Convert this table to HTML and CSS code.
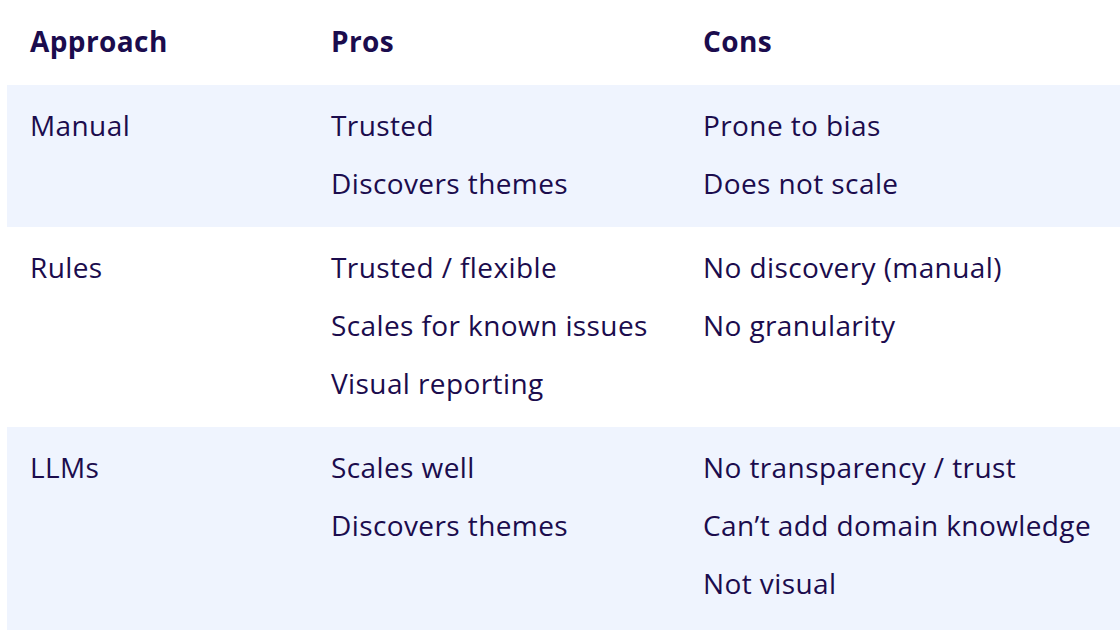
FILE: index.html
```html
<!DOCTYPE html>
<html lang="en">
<head>
<meta charset="utf-8">
<title>Approach comparison</title>
<link rel="stylesheet" href="styles.css">
</head>
<body>
<div class="table">
  <div class="row head">
    <div class="cell">Approach</div>
    <div class="cell">Pros</div>
    <div class="cell">Cons</div>
  </div>
  <div class="row shaded">
    <div class="cell"><div class="item">Manual</div></div>
    <div class="cell"><div class="item">Trusted</div><div class="item">Discovers themes</div></div>
    <div class="cell"><div class="item">Prone to bias</div><div class="item">Does not scale</div></div>
  </div>
  <div class="row">
    <div class="cell"><div class="item">Rules</div></div>
    <div class="cell"><div class="item">Trusted / flexible</div><div class="item">Scales for known issues</div><div class="item">Visual reporting</div></div>
    <div class="cell"><div class="item">No discovery (manual)</div><div class="item">No granularity</div></div>
  </div>
  <div class="row shaded last">
    <div class="cell"><div class="item">LLMs</div></div>
    <div class="cell"><div class="item">Scales well</div><div class="item">Discovers themes</div></div>
    <div class="cell"><div class="item">No transparency / trust</div><div class="item">Can’t add domain knowledge</div><div class="item">Not visual</div></div>
  </div>
</div>
</body>
</html>
```

FILE: styles.css
```css
html, body {
  margin: 0;
  padding: 0;
  background: #ffffff;
  height: 100%;
  overflow: hidden;
}
body {
  font-family: "Open Sans", "Noto Sans", sans-serif;
  color: #1b0c4d;
  font-size: 28px;
  letter-spacing: 0.4px;
}
.table {
  margin-left: 7px;
  display: flex;
  flex-direction: column;
}
.row {
  display: grid;
  grid-template-columns: 301px 372px 1fr;
  padding: 11px 0 15px;
}
.row.head {
  font-weight: 700;
  padding: 12px 0 15px;
  line-height: 58px;
}
.row.shaded {
  background: #eff4fe;
}
.row.last {
  padding-bottom: 18px;
}
.cell {
  padding-left: 23px;
  white-space: nowrap;
}
.item {
  line-height: 58px;
}
```
